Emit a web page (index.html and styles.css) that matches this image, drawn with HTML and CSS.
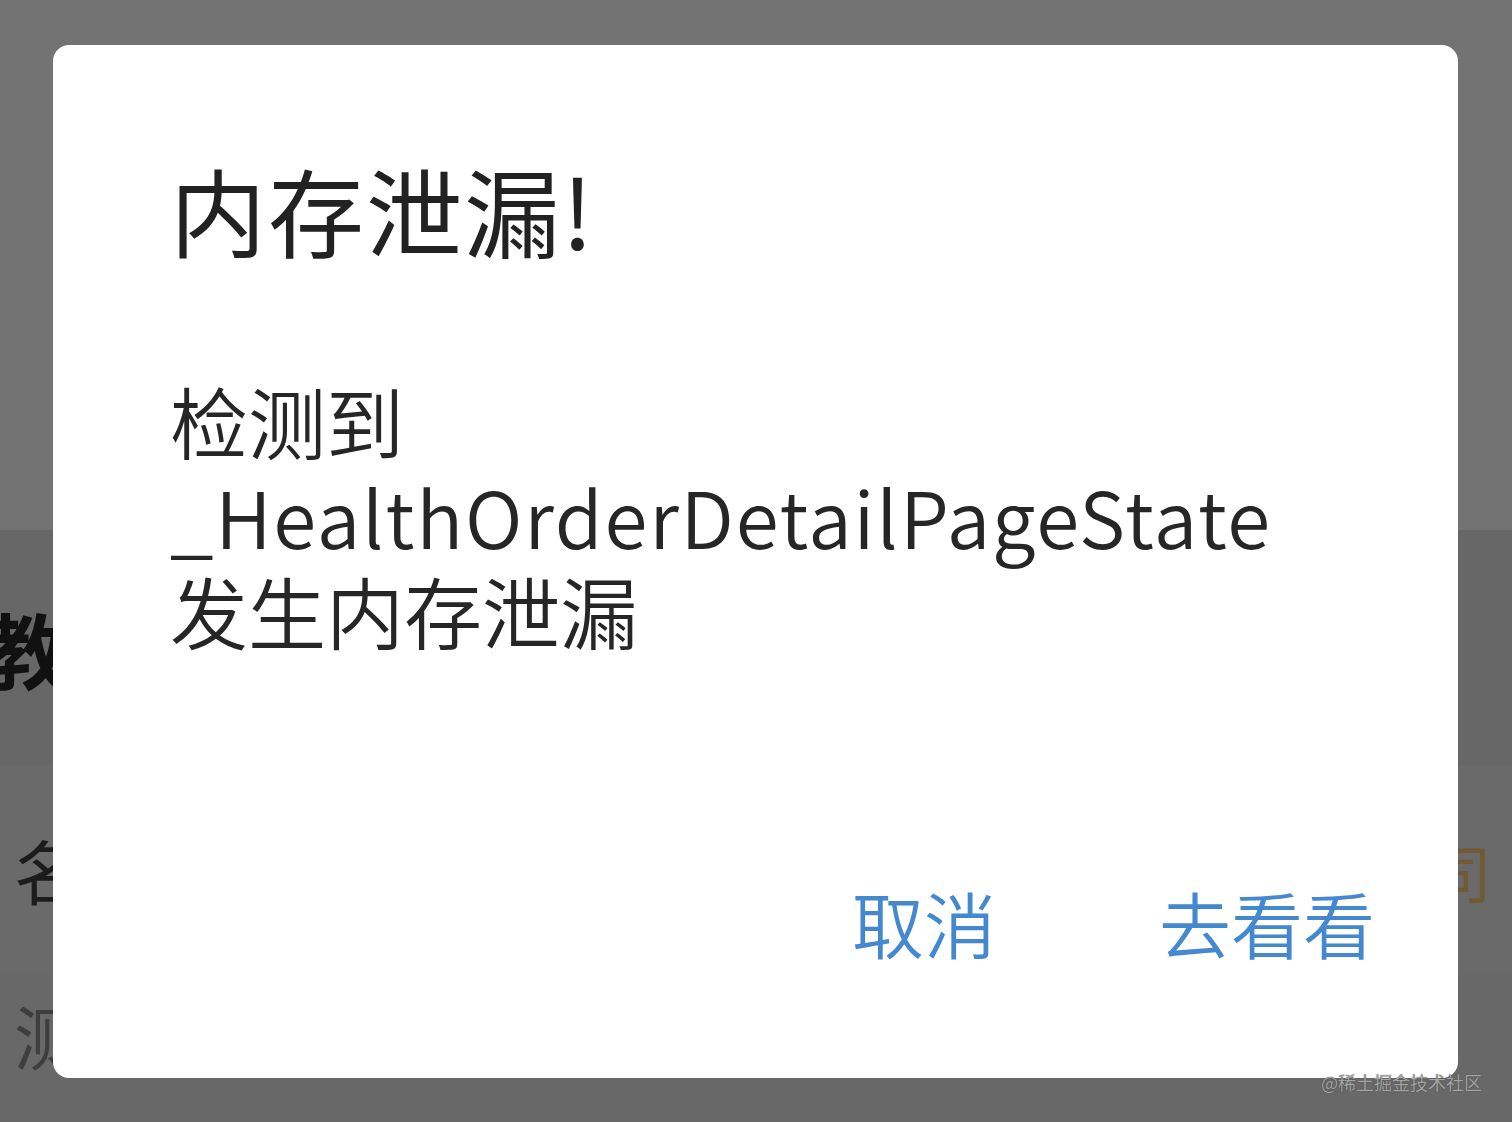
FILE: index.html
```html
<!DOCTYPE html>
<html lang="zh-CN">
<head>
    <meta charset="UTF-8">
    <meta name="viewport" content="width=device-width, initial-scale=1.0">
    <title>内存泄漏</title>
<link rel="stylesheet" href="styles.css">
</head>
<body>
    <!-- страница под диалогом (уже затемнённая) -->
    <div class="page">
        <div class="page-top"></div>
        <div class="page-band">
            <span class="band-title">时教</span>
        </div>
        <div class="page-row">
            <span class="row-label">名</span>
            <span class="row-value">司</span>
        </div>
        <div class="page-row page-row-last">
            <span class="row-label row-label-light">测试</span>
            <span class="row-mid">号</span>
        </div>
    </div>

    <div class="dialog">
        <h2 class="dialog-title">内存泄漏!</h2>
        <p class="dialog-text">检测到<br><span class="state-name">_HealthOrderDetailPageState</span><br>发生内存泄漏</p>
        <div class="dialog-actions">
            <button class="dialog-btn">取消</button>
            <button class="dialog-btn">去看看</button>
        </div>
    </div>

    <p class="watermark">@稀土掘金技术社区</p>
</body>
</html>
```

FILE: styles.css
```css
body {
    margin: 0;
    width: 1512px;
    height: 1122px;
    overflow: hidden;
    position: relative;
    background-color: #6b6b6b;
    font-family: "Noto Sans CJK SC", "Noto Sans", sans-serif;
}

.page {
    display: flex;
    flex-direction: column;
    height: 100%;
}

.page-top {
    height: 530px;
    background: #737373;
}

.page-band {
    height: 235px;
    background: #676767;
    display: flex;
    align-items: center;
    overflow: hidden;
}

.band-title {
    font-size: 82px;
    font-weight: bold;
    color: #111;
    margin-left: -96px;
    line-height: 1;
}

.page-row {
    height: 210px;
    display: flex;
    align-items: center;
    justify-content: space-between;
    background: #6a6a6a;
    overflow: hidden;
}

.page-row-last {
    flex: 1;
    align-items: flex-start;
    justify-content: flex-start;
    gap: 90px;
    background: #686868;
}

.row-label {
    font-size: 70px;
    line-height: 1;
    color: #1c1c1c;
    margin-left: 14px;
}

.row-label-light {
    color: #3e3e3e;
    margin-top: 25px;
}

.row-mid {
    font-size: 70px;
    line-height: 1;
    color: #3e3e3e;
    margin-top: 25px;
}

.row-value {
    font-size: 64px;
    line-height: 1;
    color: #6f5a35;
    margin-right: 20px;
}

.dialog {
    position: absolute;
    left: 53px;
    top: 45px;
    width: 1405px;
    height: 1033px;
    box-sizing: border-box;
    padding: 116px 83px 120px 117px;
    background: #fff;
    border-radius: 16px;
    display: flex;
    flex-direction: column;
}

.dialog-title {
    margin: 0;
    font-size: 96px;
    line-height: 96px;
    font-weight: 400;
    letter-spacing: 2px;
    color: #222;
}

.dialog-text {
    margin: 116px 0 0;
    font-size: 78px;
    line-height: 95px;
    font-weight: 350;
    color: #262626;
}

.state-name {
    letter-spacing: 1.8px;
}

.dialog-actions {
    margin-top: auto;
    display: flex;
    justify-content: flex-end;
    gap: 163px;
}

.dialog-btn {
    border: none;
    background: none;
    padding: 0;
    font-family: inherit;
    font-size: 72px;
    line-height: 72px;
    font-weight: 350;
    color: #4489cf;
    cursor: pointer;
}

.watermark {
    position: absolute;
    right: 30px;
    bottom: 31px;
    margin: 0;
    font-size: 18px;
    line-height: 1;
    color: #a5a5a5;
    text-shadow: 0 0 1px #333;
}
```
